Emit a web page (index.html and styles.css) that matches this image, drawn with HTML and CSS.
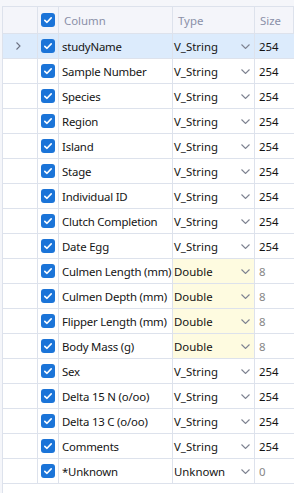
FILE: index.html
```html
<!DOCTYPE html>
<html lang="en">
<head>
    <meta charset="UTF-8">
    <title>Columns</title>
    <link rel="stylesheet" href="styles.css">
</head>
<body>
    <div class="grid" id="grid">
        <div class="row head">
            <div class="cell"></div>
            <div class="cell chk"><span class="box"></span></div>
            <div class="cell">Column</div>
            <div class="cell">Type</div>
            <div class="cell">Size</div>
        </div>
    </div>
    <script>
        const cols = [
            ['studyName', 'V_String', '254'],
            ['Sample Number', 'V_String', '254'],
            ['Species', 'V_String', '254'],
            ['Region', 'V_String', '254'],
            ['Island', 'V_String', '254'],
            ['Stage', 'V_String', '254'],
            ['Individual ID', 'V_String', '254'],
            ['Clutch Completion', 'V_String', '254'],
            ['Date Egg', 'V_String', '254'],
            ['Culmen Length (mm)', 'Double', '8'],
            ['Culmen Depth (mm)', 'Double', '8'],
            ['Flipper Length (mm)', 'Double', '8'],
            ['Body Mass (g)', 'Double', '8'],
            ['Sex', 'V_String', '254'],
            ['Delta 15 N (o/oo)', 'V_String', '254'],
            ['Delta 13 C (o/oo)', 'V_String', '254'],
            ['Comments', 'V_String', '254'],
            ['*Unknown', 'Unknown', '0']
        ];

        const check = '<svg width="14" height="14" viewBox="0 0 14 14"><rect width="14" height="14" rx="3" fill="#1b74d8"/><path d="M3.8 7.3 L6 9.3 L10.2 4.9" fill="none" stroke="#fff" stroke-width="1.6" stroke-linecap="round" stroke-linejoin="round"/></svg>';
        const caret = '<svg width="9" height="5" viewBox="0 0 9 5"><path d="M0.5 0.5 L4.5 4.5 L8.5 0.5" fill="none" stroke="#7d8290" stroke-width="1.1"/></svg>';
        const arrow = '<svg width="5" height="8" viewBox="0 0 5 8"><path d="M0.5 0.5 L4 4 L0.5 7.5" fill="none" stroke="#6b7080" stroke-width="1.1"/></svg>';

        const grid = document.getElementById('grid');
        grid.querySelector('.box').innerHTML = check;

        cols.forEach((c, i) => {
            const row = document.createElement('div');
            row.className = 'row' + (i === 0 ? ' selected' : '');
            const typeClass = c[1] === 'Double' ? 'cell type num' : 'cell type';
            const sizeClass = c[2] === '254' ? 'cell size' : 'cell size dim';
            row.innerHTML =
                '<div class="cell exp">' + (i === 0 ? arrow : '') + '</div>' +
                '<div class="cell chk">' + check + '</div>' +
                '<div class="cell name">' + c[0] + '</div>' +
                '<div class="' + typeClass + '"><span>' + c[1] + '</span>' + caret + '</div>' +
                '<div class="' + sizeClass + '">' + c[2] + '</div>';
            grid.appendChild(row);
        });
    </script>
</body>
</html>
```

FILE: styles.css
```css
body {
    margin: 0;
    background-color: #f5f6fa;
    font-family: 'Noto Sans', 'Open Sans', sans-serif;
    font-size: 11.4px;
    color: #141414;
    height: 493px;
    overflow: hidden;
}
.grid {
    margin: 6px 0 0 2px;
    border-left: 1px solid #dde2ec;
    border-top: 1px solid #dde2ec;
    background-color: #fff;
    height: 100%;
}
.row {
    display: grid;
    grid-template-columns: 35px 21px 114px 82px 1fr;
    height: 25px;
    border-bottom: 1px solid #dde2ec;
    box-sizing: border-box;
}
.row.head {
    height: 27px;
    background-color: #f4f5fa;
    color: #8a90a8;
}
.row.selected {
    background-color: #dcebfc;
}
.cell {
    display: flex;
    align-items: center;
    padding-left: 4px;
    border-right: 1px solid #dde2ec;
    box-sizing: border-box;
    white-space: nowrap;
    overflow: hidden;
}
.head .cell {
    padding-left: 5px;
}
.cell.exp {
    padding-left: 13px;
}
.cell.chk {
    padding-left: 3px;
}
.chk svg {
    display: block;
}
.cell.name {
    padding-left: 3px;
    letter-spacing: -0.2px;
}
.cell.type {
    justify-content: space-between;
    padding-right: 4px;
    padding-left: 1px;
}
.cell.type.num {
    background-color: #fefbe0;
}
.cell.size {
    border-right: none;
}
.cell.size.dim {
    color: #868686;
}
```
